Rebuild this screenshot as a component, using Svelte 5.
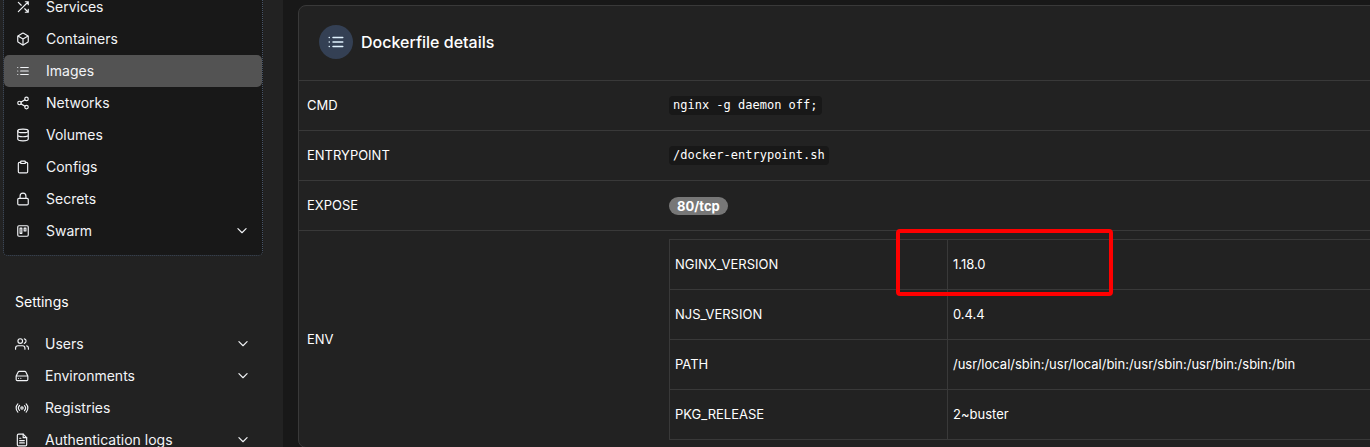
<script>
  const icons = {
    shuffle: '<path d="M16 3h5v5M4 20 21 3M21 16v5h-5M15 15l6 6M4 4l5 5"/>',
    box: '<path d="M21 16V8a2 2 0 0 0-1-1.73l-7-4a2 2 0 0 0-2 0l-7 4A2 2 0 0 0 3 8v8a2 2 0 0 0 1 1.73l7 4a2 2 0 0 0 2 0l7-4A2 2 0 0 0 21 16z"/><path d="m3.3 7 8.7 5 8.7-5M12 22V12"/>',
    list: '<path d="M8 6h13M8 12h13M8 18h13M3 6h.01M3 12h.01M3 18h.01"/>',
    share: '<circle cx="18" cy="5" r="3"/><circle cx="6" cy="12" r="3"/><circle cx="18" cy="19" r="3"/><path d="m8.6 13.5 6.8 4M15.4 6.5l-6.8 4"/>',
    database: '<ellipse cx="12" cy="5" rx="9" ry="3"/><path d="M3 5v14c0 1.7 4 3 9 3s9-1.3 9-3V5M3 12c0 1.7 4 3 9 3s9-1.3 9-3"/>',
    clipboard: '<rect x="8" y="2" width="8" height="4" rx="1"/><path d="M16 4h2a2 2 0 0 1 2 2v14a2 2 0 0 1-2 2H6a2 2 0 0 1-2-2V6a2 2 0 0 1 2-2h2"/>',
    lock: '<rect x="3" y="11" width="18" height="11" rx="2"/><path d="M7 11V7a5 5 0 0 1 10 0v4"/>',
    trello: '<rect x="3" y="3" width="18" height="18" rx="2"/><path d="M7 7h3v9H7zM14 7h3v5h-3z"/>',
    users: '<path d="M17 21v-2a4 4 0 0 0-4-4H5a4 4 0 0 0-4 4v2"/><circle cx="9" cy="7" r="4"/><path d="M23 21v-2a4 4 0 0 0-3-3.87M16 3.13a4 4 0 0 1 0 7.75"/>',
    drive: '<path d="M22 12H2M5.45 5.11 2 12v6a2 2 0 0 0 2 2h16a2 2 0 0 0 2-2v-6l-3.45-6.89A2 2 0 0 0 16.76 4H7.24a2 2 0 0 0-1.79 1.11zM6 16h.01M10 16h.01"/>',
    radio: '<path d="M4.9 19.1C1 15.2 1 8.8 4.9 4.9M7.8 16.2c-2.3-2.3-2.3-6.1 0-8.5"/><circle cx="12" cy="12" r="2"/><path d="M16.2 7.8c2.3 2.3 2.3 6.1 0 8.5M19.1 4.9C23 8.8 23 15.1 19.1 19"/>',
    file: '<path d="M14 2H6a2 2 0 0 0-2 2v16a2 2 0 0 0 2 2h12a2 2 0 0 0 2-2V8z"/><path d="M14 2v6h6M16 13H8M16 17H8M10 9H8"/>',
    chevron: '<path d="m5 8 7 7 7-7"/>'
  };

  const environment = [
    { icon: 'shuffle', label: 'Services' },
    { icon: 'box', label: 'Containers' },
    { icon: 'list', label: 'Images', active: true },
    { icon: 'share', label: 'Networks' },
    { icon: 'database', label: 'Volumes' },
    { icon: 'clipboard', label: 'Configs' },
    { icon: 'lock', label: 'Secrets' },
    { icon: 'trello', label: 'Swarm', expandable: true }
  ];
  const settings = [
    { icon: 'users', label: 'Users', expandable: true },
    { icon: 'drive', label: 'Environments', expandable: true },
    { icon: 'radio', label: 'Registries' },
    { icon: 'file', label: 'Authentication logs', expandable: true }
  ];
  const env = [
    ['NGINX_VERSION', '1.18.0'],
    ['NJS_VERSION', '0.4.4'],
    ['PATH', '/usr/local/sbin:/usr/local/bin:/usr/sbin:/usr/bin:/sbin:/bin'],
    ['PKG_RELEASE', '2~buster']
  ];
</script>

{#snippet icon(name, size)}
  <svg width={size} height={size} viewBox="0 0 24 24" aria-hidden="true">{@html icons[name]}</svg>
{/snippet}

{#snippet menu(items)}
  <ul>
    {#each items as item}
      <li>
        <a href="#{item.icon}" class:active={item.active} aria-current={item.active ? 'page' : undefined}>
          {@render icon(item.icon, 14)}
          <span>{item.label}</span>
          {#if item.expandable}{@render icon('chevron', 14)}{/if}
        </a>
      </li>
    {/each}
  </ul>
{/snippet}

<div class="page">
  <nav class="sidebar">
    <div class="environment">{@render menu(environment)}</div>
    <div class="settings">
      <h2>Settings</h2>
      {@render menu(settings)}
    </div>
  </nav>

  <main>
    <section class="card">
      <header>
        <span class="badge-icon">{@render icon('list', 18)}</span>
        <h1>Dockerfile details</h1>
      </header>
      <table class="details">
        <tbody>
          <tr><th scope="row">CMD</th><td><code>nginx -g daemon off;</code></td></tr>
          <tr><th scope="row">ENTRYPOINT</th><td><code>/docker-entrypoint.sh</code></td></tr>
          <tr><th scope="row">EXPOSE</th><td><span class="port">80/tcp</span></td></tr>
          <tr>
            <th scope="row">ENV</th>
            <td>
              <div class="env-wrap">
                <table class="env">
                  <tbody>
                    {#each env as [key, value]}
                      <tr><th scope="row">{key}</th><td>{value}</td></tr>
                    {/each}
                  </tbody>
                </table>
                <div class="highlight"></div>
              </div>
            </td>
          </tr>
        </tbody>
      </table>
    </section>
  </main>
</div>

<style>
  :global(body) {
    background: #181818;
  }
  .page {
    display: grid;
    grid-template-columns: 283px minmax(0, 1fr);
    height: 100vh;
    overflow: hidden;
    color: #fff;
    font: 13px/20px Inter, sans-serif;
  }
  .sidebar {
    background: #222;
    font-size: 14px;
  }
  .environment {
    margin: -10px 20px 0 3px;
    padding-bottom: 8px;
    border: 1px dotted #475467;
    border-radius: 0 0 5px 5px;
    background: #181818;
  }
  .settings {
    margin: 36px 20px 0 3px;
  }
  h2 {
    margin: 0 0 16px 12px;
    font-size: 14px;
    font-weight: 400;
  }
  ul {
    margin: 0;
    padding: 0;
    list-style: none;
  }
  a {
    display: flex;
    align-items: center;
    gap: 16px;
    height: 32px;
    padding: 0 13px 0 12px;
    box-sizing: border-box;
    border-radius: 5px;
    color: #f2f4f7;
    text-decoration: none;
  }
  a span {
    flex: 1;
  }
  .active {
    background: #535353;
  }
  svg {
    flex: none;
    fill: none;
    stroke: currentColor;
    stroke-width: 2;
    stroke-linecap: round;
    stroke-linejoin: round;
  }
  main {
    padding: 5px 0 0 15px;
    overflow: hidden;
  }
  .card {
    margin-right: -14px;
    border: 1px solid #393939;
    border-radius: 8px;
    background: #222;
  }
  header {
    display: flex;
    align-items: center;
    gap: 8px;
    height: 72px;
    padding: 0 20px 2px;
  }
  .badge-icon {
    display: grid;
    place-items: center;
    width: 34px;
    height: 34px;
    border-radius: 50%;
    background: #344054;
    color: #e0f2fe;
  }
  h1 {
    margin: 0;
    font-size: 16px;
    font-weight: 500;
  }
  table {
    width: 100%;
    border-collapse: collapse;
    table-layout: fixed;
  }
  th {
    font-weight: 400;
    text-align: left;
  }
  .details > tbody > tr > th,
  .details > tbody > tr > td {
    height: 47px;
    padding: 0 8px 2px;
    border-top: 1px solid #393939;
  }
  .details > tbody > tr > th {
    width: 346px;
  }
  .details > tbody > tr:last-child > th {
    padding-bottom: 0;
  }
  .details > tbody > tr:last-child > td {
    padding: 8px 8px 7px;
  }
  code {
    display: inline-block;
    padding: 2px 4px;
    border-radius: 4px;
    background: #181818;
    font: 12px/15px "DejaVu Sans Mono", monospace;
    vertical-align: middle;
  }
  .port {
    display: inline-block;
    padding: 0 8px;
    border-radius: 9px;
    background: #777;
    font-weight: 700;
    line-height: 18px;
    vertical-align: middle;
  }
  .env-wrap {
    position: relative;
  }
  .env th,
  .env td {
    height: 47px;
    padding: 0 5px 2px;
    border: 1px solid #393939;
  }
  .env th {
    width: 267px;
  }
  .highlight {
    position: absolute;
    top: -10px;
    left: 227px;
    width: 209px;
    height: 59px;
    border: 4px solid #f00;
    border-radius: 4px;
  }
</style>
